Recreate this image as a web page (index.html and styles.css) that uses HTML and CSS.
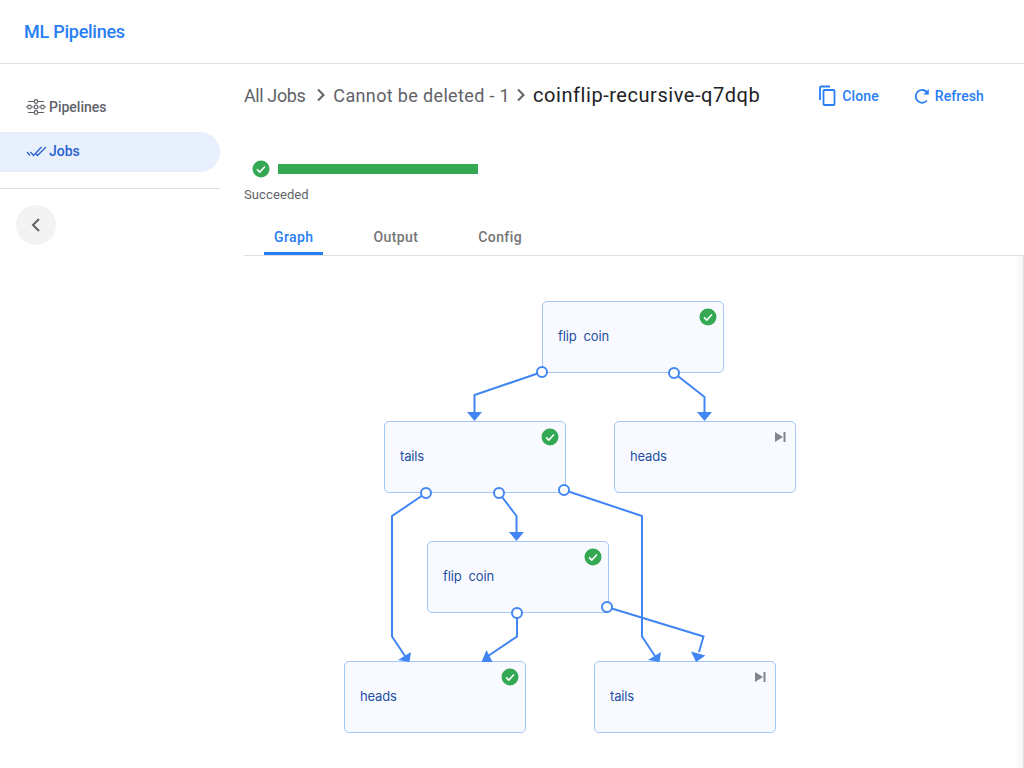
FILE: index.html
```html
<!DOCTYPE html>
<html lang="en">
<head>
    <meta charset="UTF-8">
    <meta name="viewport" content="width=device-width, initial-scale=1.0">
    <title>ML Pipelines</title>
    <link rel="stylesheet" href="styles.css">
</head>
<body>
    <header class="topbar">
        <span class="brand">ML Pipelines</span>
    </header>
    <div class="layout">
        <nav class="sidebar">
            <ul class="nav-list">
                <li class="nav-item">
                    <svg class="nav-icon" width="22" height="18" viewBox="1 0 22 18" fill="none" stroke="#5f6368" stroke-width="1.2">
                        <path d="M3 3.500h6M13 3.500h6M1 9h1M7 9h1.500M13.500 9h1.500M20 9h1M3 14.500h6M13 14.500h6"/>
                        <circle cx="11" cy="3.500" r="1.800"/>
                        <circle cx="4.500" cy="9" r="1.800"/>
                        <circle cx="11" cy="9" r="1.800"/>
                        <circle cx="17.500" cy="9" r="1.800"/>
                        <circle cx="11" cy="14.500" r="1.800"/>
                    </svg>
                    Pipelines
                </li>
                <li class="nav-item nav-active">
                    <svg class="nav-icon" width="22" height="18" viewBox="0 0 22 18" fill="none" stroke="#2a62d0" stroke-width="1.300">
                        <path d="M1 10l3 3.500M4.500 10l3 3.500L15.500 5M9.500 11.500l2 2L20 5"/>
                    </svg>
                    Jobs
                </li>
            </ul>
            <div class="collapse-row">
                <button class="collapse-btn" type="button">
                    <svg width="12" height="16" viewBox="0 0 12 16" fill="none" stroke="#5f6368" stroke-width="2"><path d="M9 2L3 8l6 6"/></svg>
                </button>
            </div>
        </nav>
        <main class="content">
            <div class="page-head">
                <div class="crumbs">
                    <span class="crumb-root">All Jobs</span>
                    <svg class="crumb-sep" width="10" height="14" viewBox="0 0 10 14" fill="none" stroke="#5f6368" stroke-width="2"><path d="M2 1.500L7.500 7 2 12.500"/></svg>
                    <span class="crumb-mid">Cannot be deleted - 1</span>
                    <svg class="crumb-sep" width="10" height="14" viewBox="0 0 10 14" fill="none" stroke="#5f6368" stroke-width="2"><path d="M2 1.500L7.500 7 2 12.500"/></svg>
                    <span class="crumb-current">coinflip-recursive-q7dqb</span>
                </div>
                <div class="actions">
                    <button class="action" type="button">
                        <svg width="20" height="22" viewBox="0 0 20 22" fill="none" stroke="#287ef5" stroke-width="1.800"><path d="M2 15V2.500a1 1 0 0 1 1-1h9"/><rect x="5.500" y="5" width="11" height="15" rx="1"/></svg>
                        Clone
                    </button>
                    <button class="action" type="button">
                        <svg width="18" height="18" viewBox="0 0 18 18" fill="none" stroke="#287ef5" stroke-width="1.800"><path d="M14 13.500A6.400 6.400 0 1 1 14.200 5.500"/><path d="M15.800 2v5.400h-5.400z" fill="#287ef5" stroke="none"/></svg>
                        Refresh
                    </button>
                </div>
            </div>
            <div class="status">
                <div class="status-bar">
                    <svg class="check" width="18" height="18" viewBox="0 0 18 18"><circle cx="9" cy="9" r="8.500" fill="#34a853"/><path d="M5 9.300l2.800 2.700L13 6.500" fill="none" stroke="#fff" stroke-width="1.600"/></svg>
                    <div class="progress"></div>
                </div>
                <div class="status-label">Succeeded</div>
            </div>
            <div class="tabs">
                <span class="tab tab-active">Graph</span>
                <span class="tab">Output</span>
                <span class="tab">Config</span>
            </div>
            <section class="graph">
                <svg class="edges" width="780" height="512" viewBox="244 256 780 512" fill="none">
                    <g stroke="#4286f4" stroke-width="2">
                        <path d="M542 372L474.500 395V412"/>
                        <path d="M674 373L704.500 397V412"/>
                        <path d="M426 493L392 516V636.500L405 656"/>
                        <path d="M499 493L516.500 516V532"/>
                        <path d="M564 490L642 516V636.500L655 656"/>
                        <path d="M517 613V636.500L488 656"/>
                        <path d="M607 607L703.500 636.500L699 652"/>
                    </g>
                    <g fill="#4286f4">
                        <path d="M467 412h15l-7.500 9z"/>
                        <path d="M697 412h15l-7.500 9z"/>
                        <path d="M509 532h15l-7.500 9z"/>
                        <path d="M398 660l13-8-1.500 10z"/>
                        <path d="M648 660l13-8-1.500 10z"/>
                        <path d="M486.500 650l6 12h-11z"/>
                        <path d="M691 651.500l14.500 4-9.500 6.500z"/>
                    </g>
                    <g fill="#fff" stroke="#4286f4" stroke-width="2">
                        <circle cx="542" cy="372" r="5"/>
                        <circle cx="674" cy="373" r="5"/>
                        <circle cx="426" cy="493" r="5"/>
                        <circle cx="499" cy="493" r="5"/>
                        <circle cx="564" cy="490" r="5"/>
                        <circle cx="517" cy="613" r="5"/>
                        <circle cx="607" cy="607" r="5"/>
                    </g>
                </svg>
                <div class="node" style="left:298px;top:45px">
                    <span>flip  coin</span>
                    <svg class="node-icon" width="18" height="18" viewBox="0 0 18 18"><circle cx="9" cy="9" r="8.500" fill="#34a853"/><path d="M5 9.300l2.800 2.700L13 6.500" fill="none" stroke="#fff" stroke-width="1.600"/></svg>
                </div>
                <div class="node" style="left:140px;top:165px">
                    <span>tails</span>
                    <svg class="node-icon" width="18" height="18" viewBox="0 0 18 18"><circle cx="9" cy="9" r="8.500" fill="#34a853"/><path d="M5 9.300l2.800 2.700L13 6.500" fill="none" stroke="#fff" stroke-width="1.600"/></svg>
                </div>
                <div class="node" style="left:370px;top:165px">
                    <span>heads</span>
                    <svg class="node-icon" width="18" height="18" viewBox="0 0 18 18"><path d="M4 4l8 5-8 5z" fill="#80868b"/><rect x="12.500" y="4" width="2" height="10" fill="#80868b"/></svg>
                </div>
                <div class="node" style="left:183px;top:285px">
                    <span>flip  coin</span>
                    <svg class="node-icon" width="18" height="18" viewBox="0 0 18 18"><circle cx="9" cy="9" r="8.500" fill="#34a853"/><path d="M5 9.300l2.800 2.700L13 6.500" fill="none" stroke="#fff" stroke-width="1.600"/></svg>
                </div>
                <div class="node" style="left:100px;top:405px">
                    <span>heads</span>
                    <svg class="node-icon" width="18" height="18" viewBox="0 0 18 18"><circle cx="9" cy="9" r="8.500" fill="#34a853"/><path d="M5 9.300l2.800 2.700L13 6.500" fill="none" stroke="#fff" stroke-width="1.600"/></svg>
                </div>
                <div class="node" style="left:350px;top:405px">
                    <span>tails</span>
                    <svg class="node-icon" width="18" height="18" viewBox="0 0 18 18"><path d="M4 4l8 5-8 5z" fill="#80868b"/><rect x="12.500" y="4" width="2" height="10" fill="#80868b"/></svg>
                </div>
            </section>
        </main>
    </div>
</body>
</html>
```
FILE: styles.css
```css
* {
    box-sizing: border-box;
}

html,
body {
    height: 100%;
}

body {
    margin: 0;
    font-family: Roboto, "Noto Sans", sans-serif;
    color: #5f6368;
    background: #fff;
    overflow: hidden;
}

.topbar {
    height: 64px;
    padding: 0 24px;
    display: flex;
    align-items: center;
    border-bottom: 1px solid #e0e0e0;
}

.brand {
    font-size: 18px;
    font-weight: 500;
    letter-spacing: -0.25px;
    color: #287ef5;
}

.layout {
    display: flex;
    height: 704px;
}

.sidebar {
    width: 220px;
    flex-shrink: 0;
    padding-top: 24px;
}

.nav-list {
    list-style: none;
    margin: 0;
    padding: 0 0 16px;
    border-bottom: 1px solid #e0e0e0;
}

.nav-item {
    height: 40px;
    margin-bottom: 4px;
    padding: 0 0 2px 26px;
    display: flex;
    align-items: center;
    gap: 1px;
    font-size: 14px;
    font-weight: 500;
    border-radius: 0 20px 20px 0;
}

.nav-item:last-child {
    margin-bottom: 0;
}

.nav-active {
    background: #e8f0fd;
    color: #2a62d0;
}

.collapse-row {
    padding: 16px;
}

.collapse-btn {
    width: 40px;
    height: 40px;
    padding: 0;
    border: 0;
    border-radius: 50%;
    background: #f3f3f3;
    display: flex;
    align-items: center;
    justify-content: center;
}

.content {
    flex: 1;
    min-width: 0;
    padding-left: 24px;
}

.page-head {
    height: 64px;
    display: flex;
    align-items: center;
    justify-content: space-between;
    padding: 0 40px 2px 0;
}

.crumbs {
    display: flex;
    align-items: center;
}

.crumb-sep {
    margin: 0 7px 0 11px;
}

.crumb-root {
    font-size: 18px;
    letter-spacing: -0.4px;
}

.crumb-mid {
    font-size: 18px;
    letter-spacing: 0.35px;
    margin-right: -5px;
}

.crumb-current {
    font-size: 20px;
    letter-spacing: 0.55px;
    color: #202124;
}

.actions {
    display: flex;
    gap: 34px;
    margin-top: 2px;
}

.action {
    display: flex;
    align-items: center;
    gap: 4px;
    padding: 0;
    border: 0;
    background: none;
    font: inherit;
    font-size: 14px;
    font-weight: 500;
    letter-spacing: 0.1px;
    color: #287ef5;
}

.status {
    padding-top: 32px;
}

.status-bar {
    display: flex;
    align-items: center;
    gap: 8px;
    padding-left: 8px;
}

.progress {
    width: 200px;
    height: 10px;
    background: #34a853;
}

.status-label {
    margin-top: 9px;
    font-size: 13px;
    letter-spacing: 0.1px;
}

.tabs {
    margin-top: 15px;
    height: 39px;
    padding-left: 20px;
    display: flex;
    border-bottom: 1px solid #e0e0e0;
}

.tab {
    padding: 0 10px;
    margin-right: 40px;
    height: 38px;
    line-height: 40px;
    font-size: 14px;
    font-weight: 500;
    letter-spacing: 0.4px;
    color: #757575;
}

.tab-active {
    color: #287ef5;
    border-bottom: 3px solid #287ef5;
    border-radius: 3px 3px 0 0;
}

.graph {
    position: relative;
    height: 512px;
    border-right: 1px solid #e0e0e0;
    background: linear-gradient(to left, #f4f4f4, #fff 8px);
}

.edges {
    position: absolute;
    left: 0;
    top: 0;
    z-index: 1;
}

.node {
    position: absolute;
    width: 182px;
    height: 72px;
    padding: 0 0 2px 15px;
    display: flex;
    align-items: center;
    background: #f8faff;
    border: 1px solid #a4c5fa;
    border-radius: 5px;
    font-size: 13px;
    letter-spacing: -0.15px;
    font-family: Inter, sans-serif;
    color: #1f4fa3;
    white-space: pre;
}

.node-icon {
    position: absolute;
    top: 6px;
    right: 6px;
}
```
